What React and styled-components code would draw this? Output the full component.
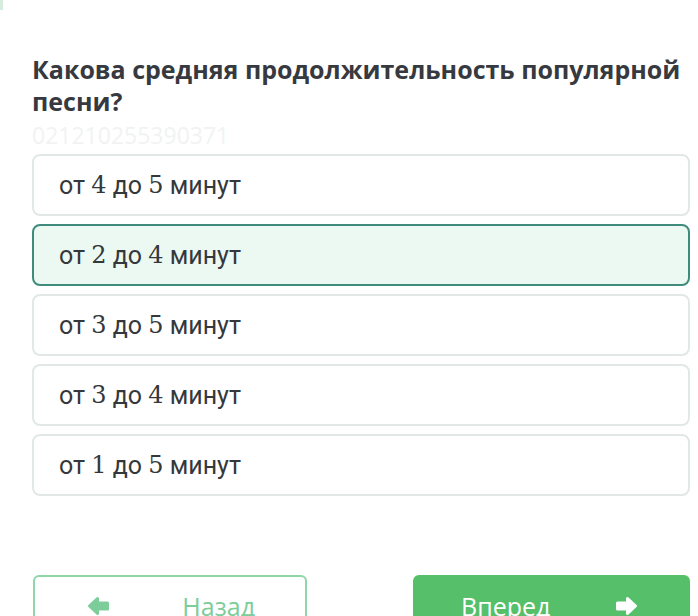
import React, { useState } from "react"
import styled, { createGlobalStyle } from "styled-components"

const GlobalStyle = createGlobalStyle`
  body {
    margin: 0;
    background: #fff;
  }
`

const Page = styled.div`
  display: flex;
  flex-direction: column;
  padding: 0 8px 0 32px;
`

const TopStrip = styled.div`
  height: 53px;
  margin-left: -32px;
`

const Marker = styled.div`
  width: 3px;
  height: 10px;
  background: #d6ecdc;
`

const Question = styled.h2`
  margin: 0;
  font-family: "Open Sans", sans-serif;
  font-weight: 700;
  font-size: 25px;
  line-height: 32px;
  color: #363a40;
`

const Code = styled.div`
  height: 37px;
  line-height: 37px;
  font-family: "Open Sans", sans-serif;
  font-size: 23px;
  color: #f1f3f3;
`

const Options = styled.div`
  display: flex;
  flex-direction: column;
  gap: 8px;
`

const Option = styled.div`
  display: flex;
  align-items: center;
  box-sizing: border-box;
  height: 62px;
  padding-left: 25px;
  border: 2px solid ${(p) => (p.$selected ? "#3f8c7d" : "#e1e8e7")};
  border-radius: 8px;
  background: ${(p) => (p.$selected ? "#ecf9f3" : "#fff")};
  font-family: Roboto, sans-serif;
  font-size: 25px;
  color: #35383b;
  cursor: pointer;
`

const Num = styled.span`
  font-family: "DejaVu Serif", serif;
  font-size: 24px;
`

const Nav = styled.div`
  display: flex;
  justify-content: space-between;
  margin-top: 79px;
  padding-left: 1px;
`

const NavButton = styled.button`
  display: flex;
  align-items: center;
  justify-content: space-between;
  box-sizing: border-box;
  width: ${(p) => (p.$primary ? "277px" : "274px")};
  height: 62px;
  padding: ${(p) => (p.$primary ? "0 50px 0 46px" : "0 50px 0 52px")};
  border: 2px solid ${(p) => (p.$primary ? "#55bf69" : "#8fd6a9")};
  border-radius: 6px;
  background: ${(p) => (p.$primary ? "#55bf69" : "#fff")};
  color: ${(p) => (p.$primary ? "#fff" : "#7dcd9a")};
  font-family: "Open Sans", sans-serif;
  font-size: 25px;
  cursor: pointer;
`

const Arrow = ({ flip }) => (
  <svg
    width="23"
    height="20"
    viewBox="0 0 23 20"
    style={flip ? { transform: "scaleX(-1)" } : undefined}
  >
    <path
      d="M2.5 10 L10.5 2.5 L10.5 7 L20.5 7 L20.5 13 L10.5 13 L10.5 17.5 Z"
      fill="currentColor"
      stroke="currentColor"
      strokeWidth="3"
      strokeLinejoin="round"
    />
  </svg>
)

const answers = [
  ["4", "5"],
  ["2", "4"],
  ["3", "5"],
  ["3", "4"],
  ["1", "5"],
]

const App = () => {
  const [selected, setSelected] = useState(1)

  return (
    <Page>
      <GlobalStyle />
      <TopStrip>
        <Marker />
      </TopStrip>
      <Question>Какова средняя продолжительность популярной песни?</Question>
      <Code>021210255390371</Code>
      <Options>
        {answers.map(([from, to], i) => (
          <Option key={i} $selected={selected === i} onClick={() => setSelected(i)}>
            от&nbsp;<Num>{from}</Num>&nbsp;до&nbsp;<Num>{to}</Num>&nbsp;минут
          </Option>
        ))}
      </Options>
      <Nav>
        <NavButton>
          <Arrow />
          Назад
        </NavButton>
        <NavButton $primary>
          Вперед
          <Arrow flip />
        </NavButton>
      </Nav>
    </Page>
  )
}

export default App
